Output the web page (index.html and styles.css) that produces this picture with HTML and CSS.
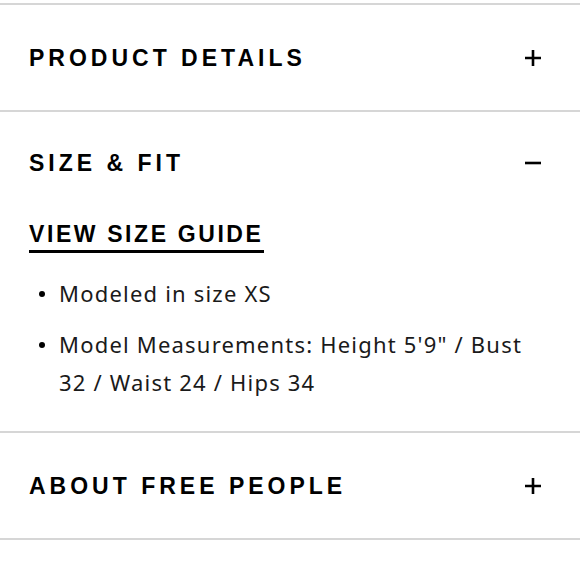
FILE: index.html
```html
<!DOCTYPE html>
<html>
<head>
<meta charset="utf-8">
<link rel="stylesheet" href="styles.css">
</head>
<body>
<div class="accordion">
  <section class="panel">
    <div class="panel-head">
      <h2 class="panel-title">PRODUCT DETAILS</h2>
      <svg class="toggle" viewBox="0 0 16 16" width="16" height="16"><path d="M8 0V16M0 8H16" stroke="#000" stroke-width="2.6" fill="none"/></svg>
    </div>
  </section>
  <section class="panel panel-open">
    <div class="panel-head">
      <h2 class="panel-title">SIZE &amp; FIT</h2>
      <svg class="toggle" viewBox="0 0 16 16" width="16" height="16"><path d="M0 8H16" stroke="#000" stroke-width="2.6" fill="none"/></svg>
    </div>
    <div class="panel-body">
      <a class="guide-link" href="#">VIEW SIZE GUIDE</a>
      <ul class="facts">
        <li class="fact"><span class="dot"></span><span class="fact-text">Modeled in size XS</span></li>
        <li class="fact"><span class="dot"></span><span class="fact-text">Model Measurements: Height 5'9" / Bust 32 / Waist 24 / Hips 34</span></li>
      </ul>
    </div>
  </section>
  <section class="panel">
    <div class="panel-head">
      <h2 class="panel-title">ABOUT FREE PEOPLE</h2>
      <svg class="toggle" viewBox="0 0 16 16" width="16" height="16"><path d="M8 0V16M0 8H16" stroke="#000" stroke-width="2.6" fill="none"/></svg>
    </div>
  </section>
</div>
</body>
</html>
```
FILE: styles.css
```css
* { box-sizing: border-box; }
html, body { margin: 0; padding: 0; background: #fff; }
body { color: #111; font-family: "Liberation Sans", Arial, sans-serif; }

.accordion {
  margin-top: 3px;
  border-top: 2px solid #d6d6d6;
}

.panel {
  border-bottom: 2px solid #d6d6d6;
}

.panel-head {
  display: flex;
  align-items: center;
  justify-content: space-between;
  height: 105px;
  padding: 0 39px 0 29px;
}

.panel-open .panel-head {
  height: auto;
  padding-top: 39px;
}

.panel-title {
  margin: 0;
  font-family: "Liberation Sans", Arial, sans-serif;
  font-weight: 700;
  font-size: 23px;
  line-height: 24px;
  letter-spacing: 4px;
  color: #000;
}

.toggle { display: block; }

.panel-body {
  padding: 47px 40px 30px 29px;
}

.guide-link {
  display: inline-block;
  font-family: "Liberation Sans", Arial, sans-serif;
  font-weight: 700;
  font-size: 23px;
  line-height: 24px;
  letter-spacing: 2.6px;
  color: #000;
  text-decoration: none;
  padding-bottom: 4px;
  border-bottom: 3px solid #000;
}

.facts {
  list-style: none;
  margin: 21px 0 0 0;
  padding: 0;
  display: flex;
  flex-direction: column;
  gap: 13px;
}

.fact {
  display: flex;
  align-items: flex-start;
  font-family: "Noto Sans", sans-serif;
  font-size: 22px;
  line-height: 38px;
  letter-spacing: 1.2px;
  color: #1a1a1a;
}

.dot {
  flex: none;
  width: 6px;
  height: 6px;
  border-radius: 50%;
  background: #000;
  margin: 17px 14px 0 10px;
}

.fact-text { flex: 1; }
```
